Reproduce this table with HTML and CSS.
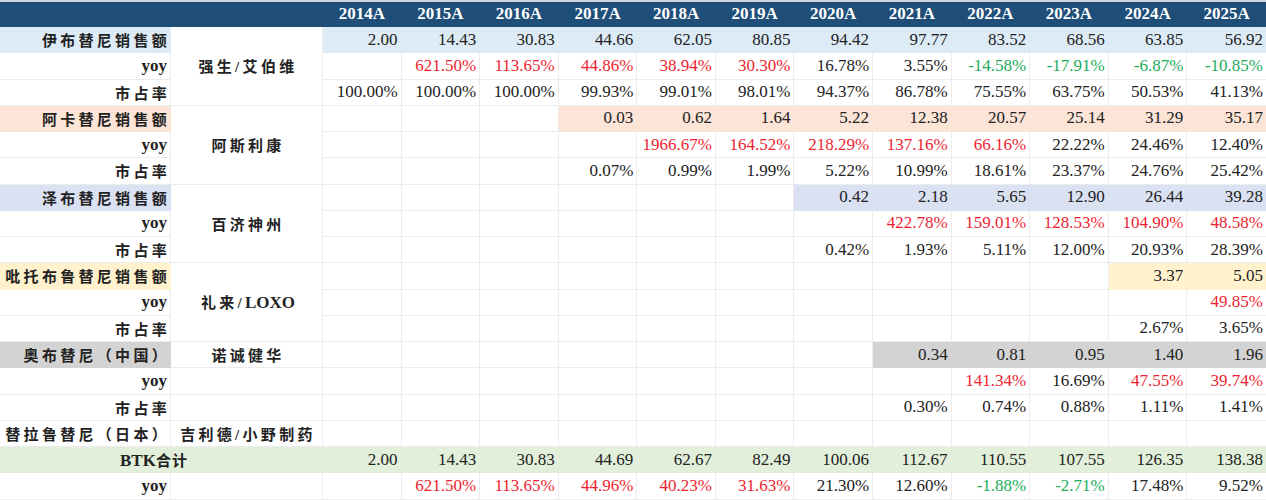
FILE: index.html
```html
<!DOCTYPE html>
<html lang="zh-CN">
<head>
<meta charset="utf-8">
<title>BTK抑制剂销售额</title>
<link rel="stylesheet" href="styles.css">
</head>
<body>
<div class="sheet">
<table class="grid">
<colgroup>
<col class="c-label"><col class="c-co">
<col><col><col><col><col><col><col><col><col><col><col><col>
</colgroup>
<thead>
<tr class="hd">
<th></th><th></th>
<th>2014A</th><th>2015A</th><th>2016A</th><th>2017A</th><th>2018A</th><th>2019A</th><th>2020A</th><th>2021A</th><th>2022A</th><th>2023A</th><th>2024A</th><th>2025A</th>
</tr>
</thead>
<tbody>
<tr>
<td class="lbl bg-blue">伊布替尼销售额</td>
<td class="co" rowspan="3">强生/艾伯维</td>
<td class="n bg-blue">2.00</td><td class="n bg-blue">14.43</td><td class="n bg-blue">30.83</td><td class="n bg-blue">44.66</td><td class="n bg-blue">62.05</td><td class="n bg-blue">80.85</td><td class="n bg-blue">94.42</td><td class="n bg-blue">97.77</td><td class="n bg-blue">83.52</td><td class="n bg-blue">68.56</td><td class="n bg-blue">63.85</td><td class="n bg-blue">56.92</td>
</tr>
<tr>
<td class="yoy">yoy</td>
<td class="n"></td><td class="n up">621.50%</td><td class="n up">113.65%</td><td class="n up">44.86%</td><td class="n up">38.94%</td><td class="n up">30.30%</td><td class="n">16.78%</td><td class="n">3.55%</td><td class="n dn">-14.58%</td><td class="n dn">-17.91%</td><td class="n dn">-6.87%</td><td class="n dn">-10.85%</td>
</tr>
<tr>
<td class="lbl">市占率</td>
<td class="n">100.00%</td><td class="n">100.00%</td><td class="n">100.00%</td><td class="n">99.93%</td><td class="n">99.01%</td><td class="n">98.01%</td><td class="n">94.37%</td><td class="n">86.78%</td><td class="n">75.55%</td><td class="n">63.75%</td><td class="n">50.53%</td><td class="n">41.13%</td>
</tr>

<tr>
<td class="lbl bg-peach">阿卡替尼销售额</td>
<td class="co" rowspan="3">阿斯利康</td>
<td class="n"></td><td class="n"></td><td class="n"></td><td class="n bg-peach">0.03</td><td class="n bg-peach">0.62</td><td class="n bg-peach">1.64</td><td class="n bg-peach">5.22</td><td class="n bg-peach">12.38</td><td class="n bg-peach">20.57</td><td class="n bg-peach">25.14</td><td class="n bg-peach">31.29</td><td class="n bg-peach">35.17</td>
</tr>
<tr>
<td class="yoy">yoy</td>
<td class="n"></td><td class="n"></td><td class="n"></td><td class="n"></td><td class="n up">1966.67%</td><td class="n up">164.52%</td><td class="n up">218.29%</td><td class="n up">137.16%</td><td class="n up">66.16%</td><td class="n">22.22%</td><td class="n">24.46%</td><td class="n">12.40%</td>
</tr>
<tr>
<td class="lbl">市占率</td>
<td class="n"></td><td class="n"></td><td class="n"></td><td class="n">0.07%</td><td class="n">0.99%</td><td class="n">1.99%</td><td class="n">5.22%</td><td class="n">10.99%</td><td class="n">18.61%</td><td class="n">23.37%</td><td class="n">24.76%</td><td class="n">25.42%</td>
</tr>

<tr>
<td class="lbl bg-lav">泽布替尼销售额</td>
<td class="co" rowspan="3">百济神州</td>
<td class="n"></td><td class="n"></td><td class="n"></td><td class="n"></td><td class="n"></td><td class="n"></td><td class="n bg-lav">0.42</td><td class="n bg-lav">2.18</td><td class="n bg-lav">5.65</td><td class="n bg-lav">12.90</td><td class="n bg-lav">26.44</td><td class="n bg-lav">39.28</td>
</tr>
<tr>
<td class="yoy">yoy</td>
<td class="n"></td><td class="n"></td><td class="n"></td><td class="n"></td><td class="n"></td><td class="n"></td><td class="n"></td><td class="n up">422.78%</td><td class="n up">159.01%</td><td class="n up">128.53%</td><td class="n up">104.90%</td><td class="n up">48.58%</td>
</tr>
<tr>
<td class="lbl">市占率</td>
<td class="n"></td><td class="n"></td><td class="n"></td><td class="n"></td><td class="n"></td><td class="n"></td><td class="n">0.42%</td><td class="n">1.93%</td><td class="n">5.11%</td><td class="n">12.00%</td><td class="n">20.93%</td><td class="n">28.39%</td>
</tr>

<tr>
<td class="lbl bg-yel">吡托布鲁替尼销售额</td>
<td class="co" rowspan="3">礼来/<span class="latin">LOXO</span></td>
<td class="n"></td><td class="n"></td><td class="n"></td><td class="n"></td><td class="n"></td><td class="n"></td><td class="n"></td><td class="n"></td><td class="n"></td><td class="n"></td><td class="n bg-yel">3.37</td><td class="n bg-yel">5.05</td>
</tr>
<tr>
<td class="yoy">yoy</td>
<td class="n"></td><td class="n"></td><td class="n"></td><td class="n"></td><td class="n"></td><td class="n"></td><td class="n"></td><td class="n"></td><td class="n"></td><td class="n"></td><td class="n"></td><td class="n up">49.85%</td>
</tr>
<tr>
<td class="lbl">市占率</td>
<td class="n"></td><td class="n"></td><td class="n"></td><td class="n"></td><td class="n"></td><td class="n"></td><td class="n"></td><td class="n"></td><td class="n"></td><td class="n"></td><td class="n">2.67%</td><td class="n">3.65%</td>
</tr>

<tr>
<td class="lbl bg-gray">奥布替尼（中国）</td>
<td class="co">诺诚健华</td>
<td class="n"></td><td class="n"></td><td class="n"></td><td class="n"></td><td class="n"></td><td class="n"></td><td class="n"></td><td class="n bg-gray">0.34</td><td class="n bg-gray">0.81</td><td class="n bg-gray">0.95</td><td class="n bg-gray">1.40</td><td class="n bg-gray">1.96</td>
</tr>
<tr>
<td class="yoy">yoy</td>
<td class="co"></td>
<td class="n"></td><td class="n"></td><td class="n"></td><td class="n"></td><td class="n"></td><td class="n"></td><td class="n"></td><td class="n"></td><td class="n up">141.34%</td><td class="n">16.69%</td><td class="n up">47.55%</td><td class="n up">39.74%</td>
</tr>
<tr>
<td class="lbl">市占率</td>
<td class="co"></td>
<td class="n"></td><td class="n"></td><td class="n"></td><td class="n"></td><td class="n"></td><td class="n"></td><td class="n"></td><td class="n">0.30%</td><td class="n">0.74%</td><td class="n">0.88%</td><td class="n">1.11%</td><td class="n">1.41%</td>
</tr>

<tr>
<td class="lbl">替拉鲁替尼（日本）</td>
<td class="co">吉利德/小野制药</td>
<td class="n"></td><td class="n"></td><td class="n"></td><td class="n"></td><td class="n"></td><td class="n"></td><td class="n"></td><td class="n"></td><td class="n"></td><td class="n"></td><td class="n"></td><td class="n"></td>
</tr>

<tr>
<td class="total bg-green" colspan="2"><span class="latin">BTK</span>合计</td>
<td class="n bg-green">2.00</td><td class="n bg-green">14.43</td><td class="n bg-green">30.83</td><td class="n bg-green">44.69</td><td class="n bg-green">62.67</td><td class="n bg-green">82.49</td><td class="n bg-green">100.06</td><td class="n bg-green">112.67</td><td class="n bg-green">110.55</td><td class="n bg-green">107.55</td><td class="n bg-green">126.35</td><td class="n bg-green">138.38</td>
</tr>
<tr>
<td class="yoy">yoy</td>
<td class="co"></td>
<td class="n"></td><td class="n up">621.50%</td><td class="n up">113.65%</td><td class="n up">44.96%</td><td class="n up">40.23%</td><td class="n up">31.63%</td><td class="n">21.30%</td><td class="n">12.60%</td><td class="n dn">-1.88%</td><td class="n dn">-2.71%</td><td class="n">17.48%</td><td class="n">9.52%</td>
</tr>
</tbody>
</table>
</div>
</body>
</html>
```

FILE: styles.css
```css
html, body {
  margin: 0;
  padding: 0;
  background: #ffffff;
}

body {
  width: 1266px;
  height: 500px;
  overflow: hidden;
  font-family: "Liberation Serif", "Noto Sans CJK SC", serif;
  color: #222222;
}

.sheet {
  border-top: 2px solid #cdd6e0;
}

.grid {
  width: 1266px;
  table-layout: fixed;
  border-collapse: separate;
  border-spacing: 0;
}

.c-label { width: 171px; }
.c-co { width: 152px; }

.grid th,
.grid td {
  box-sizing: border-box;
  padding: 0;
  border-right: 1px solid #ececec;
  border-bottom: 1px solid #ececec;
  white-space: nowrap;
  overflow: hidden;
  vertical-align: middle;
}

.grid td:last-child,
.grid th:last-child {
  border-right: 0;
}

.hd th {
  height: 25px;
  background: #1f4e79;
  border-color: #1f4e79;
  color: #ffffff;
  font-family: "Liberation Serif", serif;
  font-weight: 700;
  font-size: 17px;
  text-align: center;
}

.grid tbody tr {
  height: 26.25px;
}

.n {
  font-size: 17px;
  text-align: right;
  padding-right: 3px !important;
}

.lbl {
  font-family: "Liberation Serif", "Noto Sans CJK SC", sans-serif;
  font-weight: 700;
  font-size: 15px;
  letter-spacing: 3.3px;
  text-align: right;
}

.yoy {
  font-family: "Liberation Serif", serif;
  font-weight: 700;
  font-size: 17px;
  text-align: right;
  padding-right: 3px !important;
}

.co {
  font-family: "Liberation Serif", "Noto Sans CJK SC", sans-serif;
  font-weight: 700;
  font-size: 15px;
  letter-spacing: 3.3px;
  text-align: center;
  padding-left: 3px !important;
}

.latin {
  font-size: 17px;
  letter-spacing: 0;
}

.total {
  font-family: "Liberation Serif", "Noto Sans CJK SC", sans-serif;
  font-weight: 700;
  font-size: 15px;
  letter-spacing: 1px;
  text-align: center;
  padding-right: 14px !important;
}

.up { color: #ee1f30; }
.dn { color: #22ad5a; }

.bg-blue  { background: #ddebf7; border-color: #ddebf7 !important; }
.bg-peach { background: #fce4d6; border-color: #fce4d6 !important; }
.bg-lav   { background: #d9e1f2; border-color: #d9e1f2 !important; }
.bg-yel   { background: #fff2cc; border-color: #fff2cc !important; }
.bg-gray  { background: #d3d3d3; border-color: #d3d3d3 !important; }
.bg-green { background: #e2efda; border-color: #e2efda !important; }
```
